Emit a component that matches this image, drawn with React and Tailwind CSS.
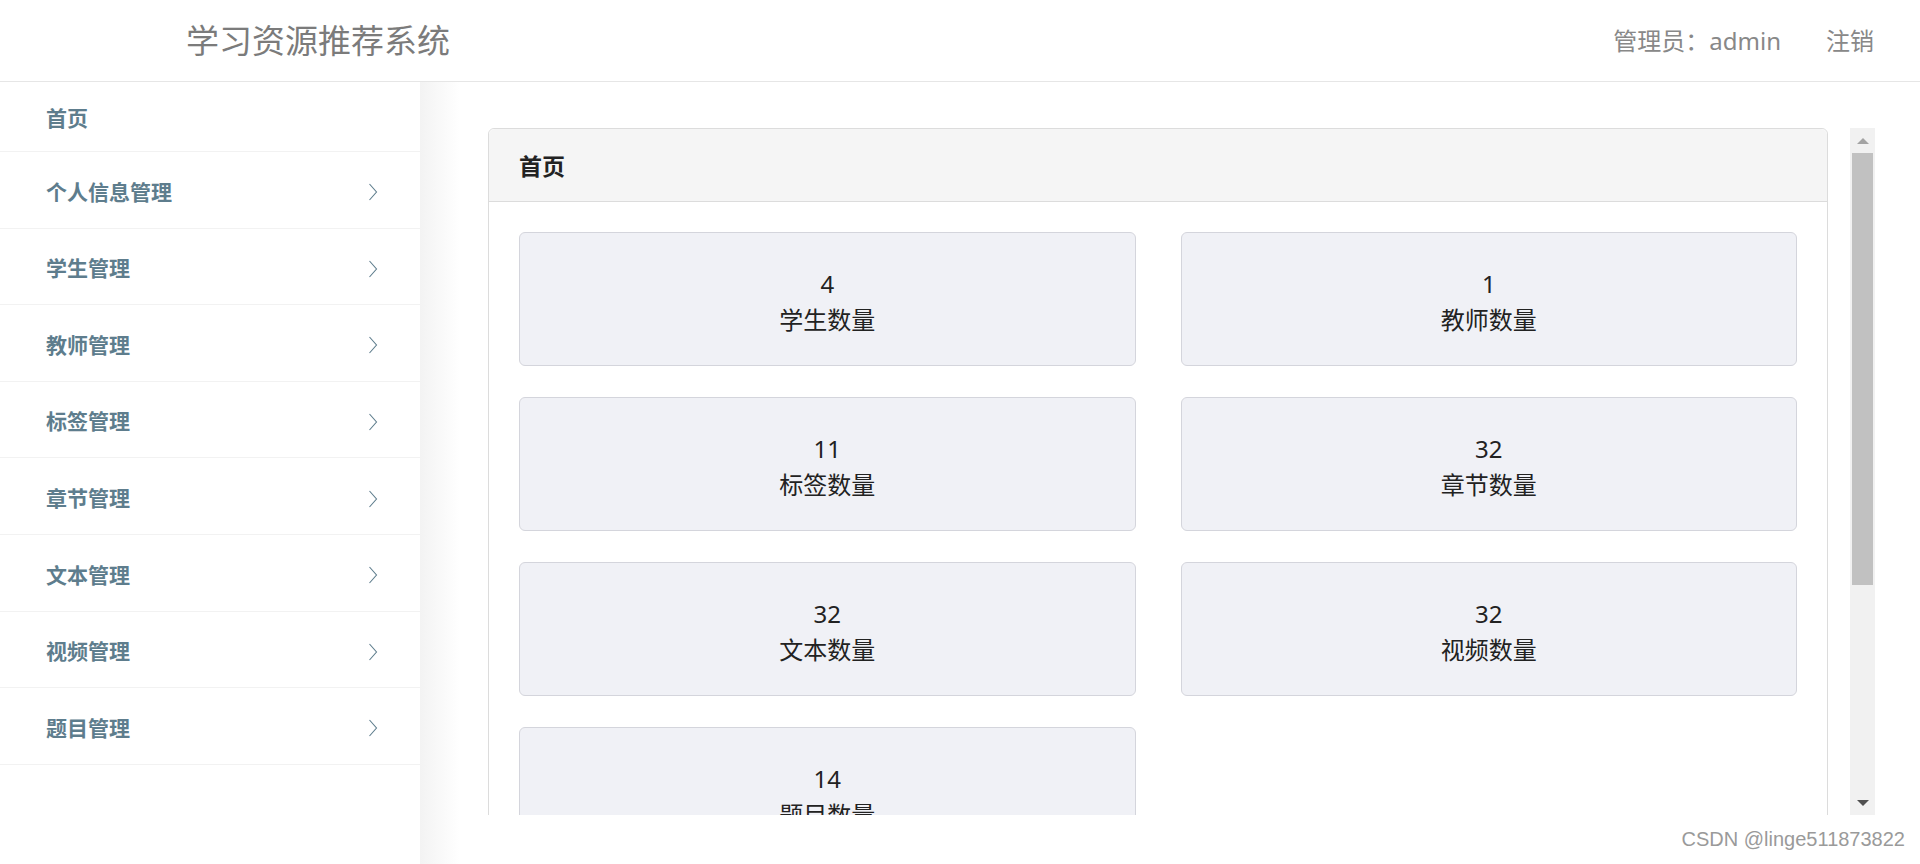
import React from "react";

const menu = ["个人信息管理", "学生管理", "教师管理", "标签管理", "章节管理", "文本管理", "视频管理", "题目管理"];
const stats = [
  ["4", "学生数量"],
  ["1", "教师数量"],
  ["11", "标签数量"],
  ["32", "章节数量"],
  ["32", "文本数量"],
  ["32", "视频数量"],
  ["14", "题目数量"],
];

function Chevron() {
  return (
    <svg width="10" height="18" viewBox="0 0 10 18" fill="none">
      <path d="M1.5 1L8.5 9L1.5 17" stroke="#5e7d8d" strokeWidth="1.1" />
    </svg>
  );
}

export default function App() {
  return (
    <div className="relative w-[1920px] h-[864px] overflow-hidden bg-white font-['Noto_Sans','Noto_Sans_CJK_SC',sans-serif]">
      {/* Header */}
      <header className="flex h-[82px] items-center border-b border-[#e6e6e6] bg-white">
        <div className="ml-[186px] text-[33px] text-[#7b7b7b] leading-none">学习资源推荐系统</div>
        <div className="ml-auto mr-[46px] flex items-center gap-[45px] text-[24px] text-[#888888] leading-none">
          <span>管理员：admin</span>
          <span>注销</span>
        </div>
      </header>

      <div className="flex h-[782px]">
        {/* Sidebar */}
        <aside className="w-[420px] shrink-0 bg-white">
          <div className="flex h-[70px] items-center border-b border-[#f2f2f2] pl-[46px] pt-[4px] text-[21px] font-bold text-[#5e7d8d]">
            首页
          </div>
          {menu.map((m) => (
            <div
              key={m}
              className="flex h-[76.6px] items-center justify-between border-b border-[#f2f2f2] pl-[46px] pr-[42px] pt-[5px] text-[21px] font-bold text-[#5e7d8d]"
            >
              <span>{m}</span>
              <Chevron />
            </div>
          ))}
        </aside>

        {/* Content */}
        <main className="flex-1 bg-[linear-gradient(to_right,#f3f3f3,#ffffff_40px)] pl-[68px] pt-[46px]">
          <div className="flex h-[687px] w-[1387px] items-start overflow-hidden">
            <section className="w-[1340px] shrink-0 rounded-t-[6px] border border-[#dcdcdc] bg-white">
              <div className="flex h-[73px] items-center rounded-t-[6px] border-b border-[#dcdcdc] bg-[#f5f5f5] pl-[30px] pt-[3px] text-[23px] font-bold text-[#222222]">
                首页
              </div>
              <div className="grid grid-cols-2 gap-x-[45px] gap-y-[31px] px-[30px] pt-[30px] pb-[30px]">
                {stats.map(([n, l], i) => (
                  <div
                    key={i}
                    className="flex h-[134px] flex-col items-center justify-center rounded-[6px] border border-[#d4d5dc] bg-[#f0f1f6] pt-[5px] text-[24px] leading-[36px] text-[#222222]"
                  >
                    <span>{n}</span>
                    <span>{l}</span>
                  </div>
                ))}
              </div>
            </section>

            {/* Scrollbar */}
            <div className="ml-[22px] flex h-[687px] w-[25px] shrink-0 flex-col bg-[#f1f1f1]">
              <div className="flex h-[25px] items-center justify-center">
                <div className="h-0 w-0 border-x-[6px] border-b-[6px] border-x-transparent border-b-[#a3a3a3]" />
              </div>
              <div className="mx-[2px] h-[432px] bg-[#c1c1c1]" />
              <div className="flex-1" />
              <div className="flex h-[25px] items-center justify-center">
                <div className="h-0 w-0 border-x-[6px] border-t-[6px] border-x-transparent border-t-[#505050]" />
              </div>
            </div>
          </div>
        </main>
      </div>

      <div className="absolute right-[15px] bottom-[10px] font-['Liberation_Sans',sans-serif] text-[20px] text-[#9a9a9a]">
        CSDN @linge511873822
      </div>
    </div>
  );
}
